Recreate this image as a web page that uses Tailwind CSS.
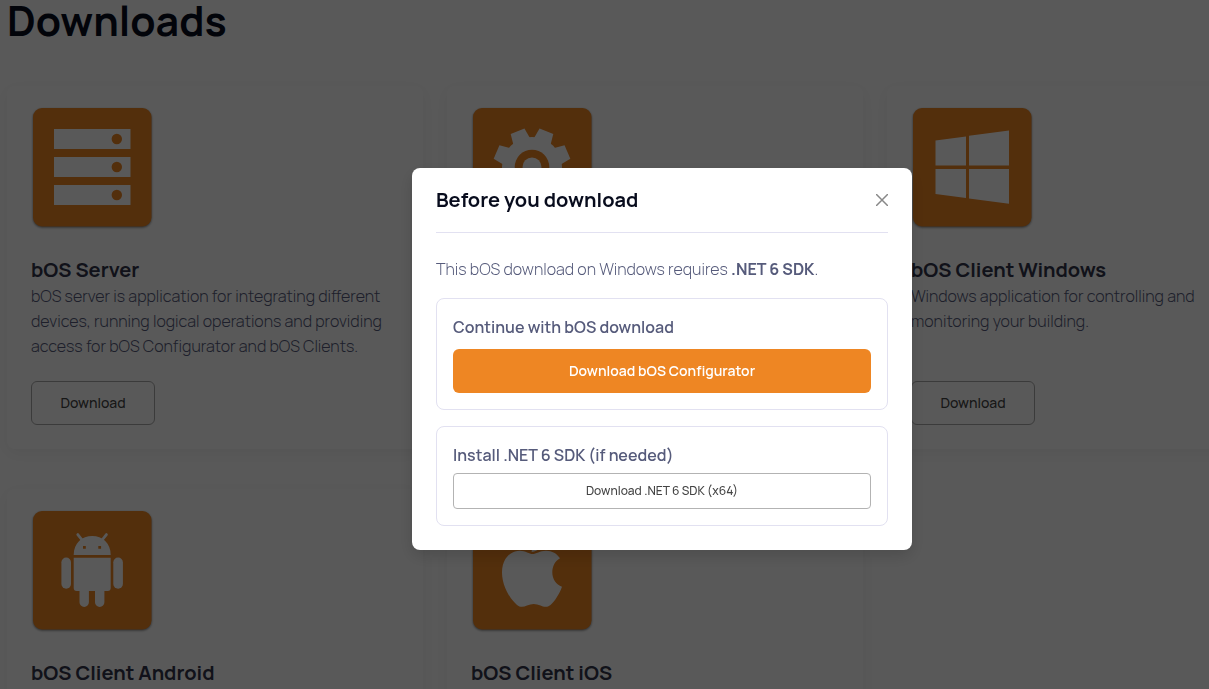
<!DOCTYPE html>
<html lang="en">
<head>
  <meta charset="UTF-8" />
  <meta name="viewport" content="width=device-width, initial-scale=1.0"/>
  <title>Downloads</title>

  <!-- Tailwind CDN -->
  <script src="https://cdn.jsdelivr.net/npm/@tailwindcss/browser@4"></script>
</head>

<body class="h-screen overflow-hidden bg-white font-['Manrope','Inter',sans-serif] text-[#565b7b]">
  <main class="px-[7px]">
    <h1 class="text-[41px] leading-10 font-bold text-[#080c1d]">Downloads</h1>

    <!-- Download cards -->
    <div class="mt-[46px] grid grid-cols-[repeat(3,minmax(416px,1fr))] gap-x-6 gap-y-10">

      <article class="rounded-lg px-6 pt-5 pb-6 shadow-[0_4px_16px_rgba(0,0,0,0.06)]">
        <svg class="size-[124px] drop-shadow-[0_1px_1px_rgba(0,0,0,0.5)]" viewBox="0 0 124 124">
          <rect x="2" y="2" width="118.500" height="118.500" rx="9" fill="#ee8623"/>
          <path fill="#fff" d="M23 23h76.500v20H23zM23 51h76.500v20H23zM23 79h76.500v20H23z"/>
          <g fill="#ee8623">
            <circle cx="85.800" cy="33" r="5.200"/>
            <circle cx="85.800" cy="61" r="5.200"/>
            <circle cx="85.800" cy="89" r="5.200"/>
          </g>
        </svg>
        <h2 class="mt-[26px] text-xl font-bold text-[#31344a]">bOS Server</h2>
        <p class="min-h-[75px] text-base leading-[25px] font-light">bOS server is application for integrating different devices, running logical operations and providing access for bOS Configurator and bOS Clients.</p>
        <button type="button" class="mt-[22px] h-11 w-[124px] rounded-md border border-[#aaa] text-sm font-medium text-[#444]">Download</button>
      </article>

      <article class="rounded-lg px-6 pt-5 pb-6 shadow-[0_4px_16px_rgba(0,0,0,0.06)]">
        <svg class="size-[124px] drop-shadow-[0_1px_1px_rgba(0,0,0,0.5)]" viewBox="0 0 124 124">
          <defs>
            <path id="tooth" d="M-9-27L-7.400-38.500H7.400L9-27z"/>
          </defs>
          <rect x="2" y="2" width="118.500" height="118.500" rx="9" fill="#ee8623"/>
          <g transform="translate(61 61)" fill="#fff">
            <circle r="30"/>
            <use href="#tooth" transform="rotate(22)"/>
            <use href="#tooth" transform="rotate(67)"/>
            <use href="#tooth" transform="rotate(112)"/>
            <use href="#tooth" transform="rotate(157)"/>
            <use href="#tooth" transform="rotate(-22)"/>
            <use href="#tooth" transform="rotate(-67)"/>
            <use href="#tooth" transform="rotate(-112)"/>
            <use href="#tooth" transform="rotate(-157)"/>
            <circle r="17.300" fill="#ee8623"/>
            <circle r="9.500"/>
          </g>
        </svg>
        <h2 class="mt-[26px] text-xl font-bold text-[#31344a]">&nbsp;</h2>
      </article>

      <article class="rounded-lg px-6 pt-5 pb-6 shadow-[0_4px_16px_rgba(0,0,0,0.06)]">
        <svg class="size-[124px] drop-shadow-[0_1px_1px_rgba(0,0,0,0.5)]" viewBox="0 0 124 124">
          <rect x="2" y="2" width="118.500" height="118.500" rx="9" fill="#ee8623"/>
          <path fill="#fff" d="M24.500 34.500L55 30.500V59.500H24.500zM58 29.800L98 24.500V59.500H58zM24.500 63H55V92L24.500 88zM58 63H98V97.700L58 92.500z"/>
        </svg>
        <h2 class="mt-[26px] text-xl font-bold text-[#31344a]">bOS Client Windows</h2>
        <p class="min-h-[75px] max-w-[300px] text-base leading-[25px] font-light">Windows application for controlling and monitoring your building.</p>
        <button type="button" class="mt-[22px] h-11 w-[124px] rounded-md border border-[#aaa] text-sm font-medium text-[#444]">Download</button>
      </article>

      <article class="rounded-lg px-6 pt-5 pb-6 shadow-[0_4px_16px_rgba(0,0,0,0.06)]">
        <svg class="size-[124px] drop-shadow-[0_1px_1px_rgba(0,0,0,0.5)]" viewBox="0 0 124 124">
          <rect x="2" y="2" width="118.500" height="118.500" rx="9" fill="#ee8623"/>
          <g fill="#fff">
            <path d="M42.700 46C42.700 34 51 27 61.200 27S79.700 34 79.700 46z"/>
            <path d="M46.800 25.600L51.500 31.500M75.400 25.600L70.700 31.500" stroke="#fff" stroke-width="2.800" stroke-linecap="round"/>
            <path d="M42.700 48.700H79.700V79a3 3 0 0 1-3 3H45.700a3 3 0 0 1-3-3z"/>
            <rect x="30.400" y="48.500" width="9.600" height="31.200" rx="4.800"/>
            <rect x="82.300" y="48.500" width="9.600" height="31.200" rx="4.800"/>
            <path d="M48.500 80h9.400v13.300a4.700 4.700 0 0 1-9.400 0zM64 80h9.400v13.300a4.700 4.700 0 0 1-9.400 0z"/>
          </g>
          <path fill="#ee8623" d="M52 36.900h2.800v2.800H52zM67.300 36.900h2.800v2.800h-2.800z"/>
        </svg>
        <h2 class="mt-[26px] text-xl font-bold text-[#31344a]">bOS Client Android</h2>
      </article>

      <article class="rounded-lg px-6 pt-5 pb-6 shadow-[0_4px_16px_rgba(0,0,0,0.06)]">
        <svg class="size-[124px] drop-shadow-[0_1px_1px_rgba(0,0,0,0.5)]" viewBox="0 0 124 124">
          <rect x="2" y="2" width="118.500" height="118.500" rx="9" fill="#ee8623"/>
          <path fill="#fff" d="M61.500 45C65 45 69 41.700 75 41.700C81 41.700 86 44.500 89 49.300C84 52 81.300 57.500 81.300 63.300C81.300 70 85 75.500 91 77.700C88.500 85 83.500 92.500 79.500 96C76 98.800 72.500 97.800 69.500 96.500C65 94.500 60.500 94.500 56 96.500C52.500 98.200 49 98.500 46 96C37 88 31 75 31 63.500C31 50 39 41.700 49 41.700C54.500 41.700 58.500 45 61.500 45zM60.700 43C60.500 35 66 29 73.500 27C74 35.500 68 42.500 60.700 43z"/>
        </svg>
        <h2 class="mt-[26px] text-xl font-bold text-[#31344a]">bOS Client iOS</h2>
      </article>
    </div>
  </main>

  <!-- Modal -->
  <div class="fixed inset-y-0 left-0 -right-[115px] flex items-start justify-center bg-black/65 pt-[168px]">
    <section role="dialog" aria-labelledby="modal-title" class="w-full max-w-[500px] rounded-lg bg-white px-6 pb-6 shadow-[0_6px_16px_rgba(0,0,0,0.15)]">
      <header class="flex items-center justify-between border-b border-[#e2e1f1] py-5">
        <h2 id="modal-title" class="text-xl leading-6 font-bold text-[#080c1d]">Before you download</h2>
        <button type="button" aria-label="Close">
          <svg class="size-3" viewBox="0 0 12 12" fill="none" stroke="#888" stroke-width="1.500"><path d="M0 0L12 12M12 0L0 12"/></svg>
        </button>
      </header>

      <p class="mt-6 mb-4 text-base leading-[25px] font-light">This bOS download on Windows requires <strong class="font-bold">.NET 6 SDK</strong>.</p>

      <div class="rounded-lg border border-[#e2e1f1] p-4">
        <h3 class="mb-2.5 text-base leading-6 font-semibold">Continue with bOS download</h3>
        <button type="button" class="block h-11 w-full rounded-md bg-[#ee8623] text-sm font-semibold text-white">Download bOS Configurator</button>
      </div>

      <div class="mt-4 rounded-lg border border-[#e2e1f1] p-4">
        <h3 class="mb-1.5 text-base leading-6 font-semibold">Install .NET 6 SDK (if needed)</h3>
        <button type="button" class="block h-9 w-full rounded border border-[#b3b3b3] text-xs font-medium text-[#444]">Download .NET 6 SDK (x64)</button>
      </div>
    </section>
  </div>
</body>
</html>
